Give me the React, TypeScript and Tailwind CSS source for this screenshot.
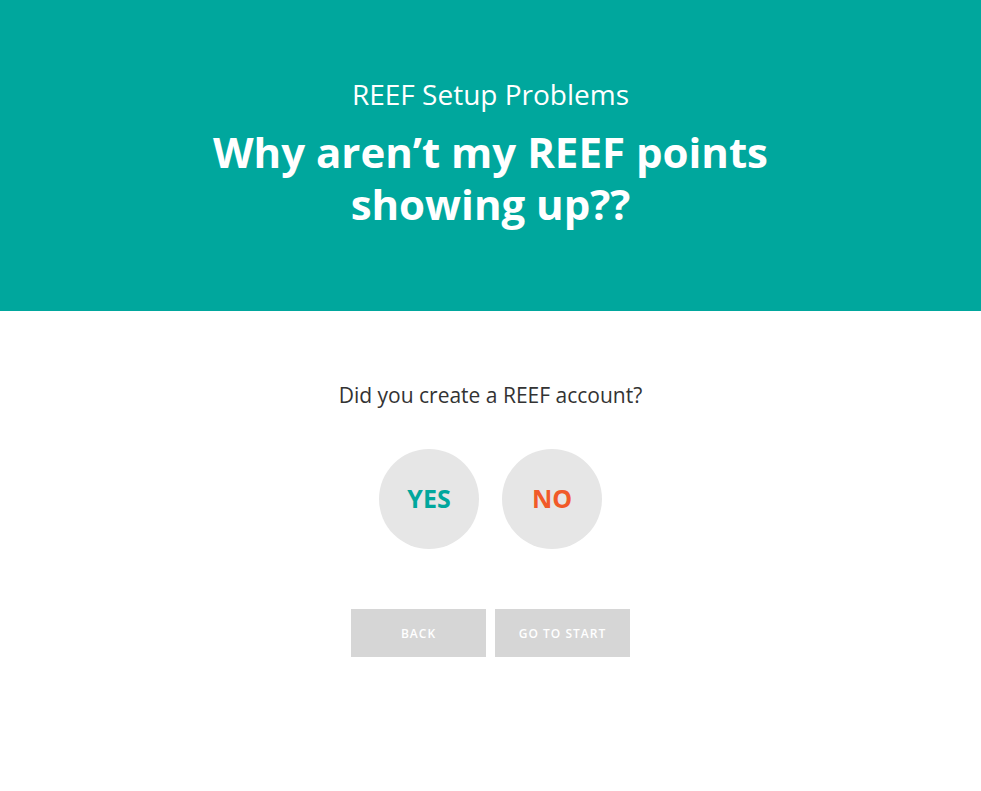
export default function App() {
  return (
    <div className="min-h-screen bg-white" style={{ fontFamily: '"Open Sans", "Liberation Sans", sans-serif' }}>
      {/* Header */}
      <header className="h-[311px] bg-[#00a79d] pt-[76px] text-center text-white">
        <p className="text-[28px] leading-[36px] font-normal">REEF Setup Problems</p>
        <h1 className="mx-auto mt-[14px] max-w-[640px] text-[42px] leading-[52px] font-bold">
          Why aren’t my REEF points showing up??
        </h1>
      </header>

      {/* Question */}
      <main className="flex flex-col items-center pt-[70px]">
        <p className="text-[21px] leading-[28px] text-[#333333]">Did you create a REEF account?</p>

        <div className="mt-[40px] flex gap-[23px]">
          <button className="flex h-[100px] w-[100px] items-center justify-center rounded-full bg-[#e6e6e6] text-[25px] font-bold text-[#00a79d]">
            YES
          </button>
          <button className="flex h-[100px] w-[100px] items-center justify-center rounded-full bg-[#e6e6e6] text-[25px] font-bold text-[#f15a29]">
            NO
          </button>
        </div>

        <div className="mt-[60px] flex gap-[9px]">
          <button className="h-[48px] w-[135px] bg-[#d6d6d6] pt-px text-[12px] font-semibold tracking-[1px] text-white">
            BACK
          </button>
          <button className="h-[48px] w-[135px] bg-[#d6d6d6] pt-px text-[12px] font-semibold tracking-[1px] text-white">
            GO TO START
          </button>
        </div>
      </main>
    </div>
  );
}
